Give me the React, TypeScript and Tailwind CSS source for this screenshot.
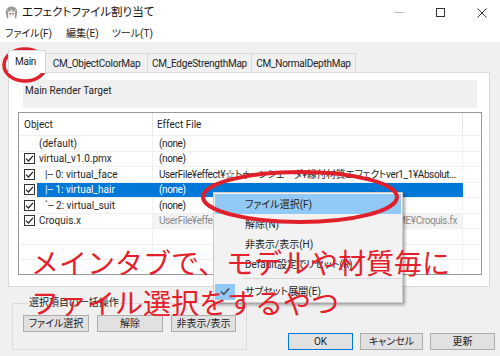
import React from "react";

const ui = "font-['Roboto','Noto_Sans_CJK_JP',sans-serif] [font-feature-settings:'palt']";

type Row = {
  check: boolean;
  label: string;
  indent: boolean;
  file: string;
  selected?: boolean;
  gray?: boolean;
};

const rows: Row[] = [
  { check: false, label: "(default)", indent: false, file: "(none)" },
  { check: true, label: "virtual_v1.0.pmx", indent: false, file: "(none)" },
  {
    check: true,
    label: "|-- 0: virtual_face",
    indent: true,
    file: "UserFile¥effect¥☆トゥーンシェーダ¥縁付材質エフェクトver1_1¥Absolut...",
  },
  { check: true, label: "|-- 1: virtual_hair", indent: true, file: "(none)", selected: true },
  { check: true, label: "`-- 2: virtual_suit", indent: true, file: "(none)" },
  {
    check: true,
    label: "Croquis.x",
    indent: false,
    file: "UserFile¥effect¥クロッキー風エフェクト_ver1.0¥Croquis_MME¥Croquis.fx",
    gray: true,
  },
];

function CheckBox({ checked }: { checked: boolean }) {
  return (
    <div className="w-[11px] h-[11px] border border-[#333] bg-white flex items-center justify-center shrink-0">
      {checked && (
        <svg width="9" height="9" viewBox="0 0 9 9">
          <path d="M1 4.6 L3.4 7 L8 1.8" fill="none" stroke="#222" strokeWidth="1.2" />
        </svg>
      )}
    </div>
  );
}

function AppIcon() {
  return (
    <svg width="13" height="14" viewBox="0 0 13 14">
      <path d="M1 8 C0 3 3 0.5 6.5 0.5 C10 0.5 13 3 12 8 L11 13 L9 10 L4 10 L2 13 Z" fill="#9a9a9a" />
      <path d="M3 6 C4 4.5 9 4.5 10 6 L10 10 C9 12 4 12 3 10 Z" fill="#f4efec" />
      <path d="M2 3 L5 6 L6 2 L8 6 L11 3 L11 5 L2 5 Z" fill="#c8c8c8" />
      <rect x="4.5" y="7" width="1.3" height="1.5" fill="#555" />
      <rect x="7.3" y="7" width="1.3" height="1.5" fill="#555" />
    </svg>
  );
}

function Btn({ children, w, primary }: { children: React.ReactNode; w: string; primary?: boolean }) {
  return (
    <div
      className={`${w} h-[17px] flex items-center justify-center text-[10px] text-[#222] bg-[#e1e1e1] border ${
        primary ? "border-[#0078d7]" : "border-[#adadad]"
      }`}
    >
      {children}
    </div>
  );
}

export default function App() {
  return (
    <div className={`relative w-[500px] h-[356px] overflow-hidden bg-[#f0f0f0] ${ui} text-[#1e1e1e]`}>
      {/* Title bar */}
      <div className="h-[25px] bg-white flex items-center pl-[5px]">
        <AppIcon />
        <span className="ml-[4px] text-[11.5px] text-[#111]">エフェクトファイル割り当て</span>
        <div className="ml-auto flex items-center gap-[32px] pr-[13px]">
          <div className="w-[10px] h-px bg-[#bbb]" />
          <div className="w-[9px] h-[9px] border border-[#333]" />
          <svg width="10" height="10" viewBox="0 0 10 10">
            <path d="M0.5 0.5 L9.5 9.5 M9.5 0.5 L0.5 9.5" stroke="#333" strokeWidth="1" />
          </svg>
        </div>
      </div>

      {/* Menu bar */}
      <div className="h-[17px] bg-white flex items-center text-[10px] text-[#222]">
        <span className="ml-[5px]">ファイル(F)</span>
        <span className="ml-[14px]">編集(E)</span>
        <span className="ml-[13px]">ツール(T)</span>
      </div>

      {/* Body */}
      <div className="px-[8px] pt-[8px]">
        {/* Tabs */}
        <div className="relative z-10 flex items-end h-[23px] -mb-px text-[10px] tracking-[-0.25px] text-[#222] whitespace-nowrap">
          <div className="w-[38px] h-[23px] bg-white border border-b-0 border-[#d9d9d9] flex items-center pl-[6px] pb-[2px]">
            Main
          </div>
          <div className="w-[102px] h-[20px] bg-[#f0f0f0] border border-l-0 border-[#d9d9d9] flex items-center justify-center">
            CM_ObjectColorMap
          </div>
          <div className="w-[104px] h-[20px] bg-[#f0f0f0] border border-l-0 border-[#d9d9d9] flex items-center justify-center">
            CM_EdgeStrengthMap
          </div>
          <div className="w-[104px] h-[20px] bg-[#f0f0f0] border border-l-0 border-[#d9d9d9] flex items-center justify-center">
            CM_NormalDepthMap
          </div>
        </div>

        {/* Panel */}
        <div className="w-[482px] h-[215px] bg-white border border-[#d9d9d9]">
          <div className="ml-[14px] mt-[7px] w-[454px] h-[28px] bg-[#f0f0f0] pl-[2px] pt-[4px] text-[10px] leading-[14px] text-[#222]">
            Main Render Target
          </div>

          {/* List view */}
          <div className="ml-[9px] mt-[4px] w-[464px] h-[163px] border border-[#9a9a9a] bg-white text-[10px] text-[#1e1e1e] overflow-hidden">
            <div className="flex h-[22px]">
              <div className="w-[134px] border-r border-[#e5e5e5] flex items-center pl-[5px]">Object</div>
              <div className="w-[310px] border-r border-[#e5e5e5] flex items-center pl-[4px]">Effect File</div>
              <div className="flex-1" />
            </div>
            {rows.map((r, i) => (
              <div key={i} className="flex h-[15.5px] border-t border-[#f0f0f0]">
                <div className="w-[18px] flex items-center pl-[5px] shrink-0">
                  {r.check && <CheckBox checked />}
                </div>
                <div
                  className={`w-[116px] shrink-0 flex items-center whitespace-nowrap overflow-hidden border-r ${
                    r.selected ? "bg-[#0078d7] text-white border-[#0078d7]" : "border-[#f0f0f0]"
                  } ${r.indent ? "pl-[8px]" : "pl-[2px]"}`}
                >
                  {r.label}
                </div>
                <div
                  className={`w-[310px] shrink-0 flex items-center whitespace-nowrap overflow-hidden pl-[6px] border-r tracking-[-0.4px] ${
                    r.selected
                      ? "bg-[#0078d7] text-white border-[#0078d7]"
                      : r.gray
                      ? "bg-[#f3f3f3] text-[#8a8a8a] border-[#f0f0f0]"
                      : "border-[#f0f0f0]"
                  }`}
                >
                  {r.file}
                </div>
                <div className="flex-1" />
              </div>
            ))}
            {[0, 1, 2].map((k) => (
              <div key={k} className="flex h-[15.5px] border-t border-[#f0f0f0]">
                <div className="w-[134px] border-r border-[#f0f0f0]" />
                <div className="w-[310px] border-r border-[#f0f0f0]" />
              </div>
            ))}
          </div>
        </div>

        {/* Bottom area */}
        <div className="flex mt-[10px]">
          <fieldset className="ml-[4px] w-[235px] border border-[#dcdcdc] px-[10px] pb-[10px]">
            <legend className="ml-[5px] px-[1px] text-[10px] leading-[12px] text-[#222]">選択項目の一括操作</legend>
            <div className="flex gap-[8px] mt-[6px]">
              <Btn w="w-[66px]">ファイル選択</Btn>
              <Btn w="w-[66px]">解除</Btn>
              <Btn w="w-[65px]">非表示/表示</Btn>
            </div>
          </fieldset>
          <div className="ml-auto -mr-[3px] pt-[36px] flex gap-[7px]">
            <Btn w="w-[65px]" primary>
              OK
            </Btn>
            <Btn w="w-[63px]">キャンセル</Btn>
            <Btn w="w-[65px]">更新</Btn>
          </div>
        </div>
      </div>

      {/* Context menu */}
      <div className="absolute left-[213px] top-[192px] w-[190px] bg-[#f2f2f2] border border-[#cccccc] shadow-[2px_2px_3px_rgba(0,0,0,0.35)] p-[1px] text-[10px] text-[#222]">
        <div className="h-[20px] bg-[#91c9f7] flex items-center pl-[30px]">ファイル選択(F)</div>
        <div className="h-[20px] flex items-center pl-[30px]">解除(N)</div>
        <div className="h-[20px] flex items-center pl-[30px]">非表示/表示(H)</div>
        <div className="h-[20px] flex items-center pl-[30px]">Default設定でリセット(R)</div>
        <div className="h-[8px] flex items-center pl-[28px]">
          <div className="w-full h-px bg-[#d7d7d7]" />
        </div>
        <div className="h-[19px] flex items-center">
          <div className="w-[20px] h-[16px] bg-[#91c9f7] flex items-center justify-center">
            <svg width="10" height="9" viewBox="0 0 10 9">
              <path d="M1 4.5 L3.8 7.3 L9 1.5" fill="none" stroke="#333" strokeWidth="1.2" />
            </svg>
          </div>
          <span className="ml-[10px]">サブセット展開(E)</span>
        </div>
      </div>

      {/* Red annotations */}
      <svg className="absolute inset-0 pointer-events-none" width="500" height="356">
        <ellipse cx="25" cy="65" rx="21" ry="16" fill="none" stroke="#e0202a" strokeWidth="3.5" />
        <ellipse cx="300" cy="197" rx="97" ry="25" fill="none" stroke="#e0202a" strokeWidth="4" />
      </svg>
      <div className="absolute left-[31px] top-[242px] text-[28px] leading-[40px] text-[#e5202a] font-['Noto_Sans_CJK_JP',sans-serif] [font-feature-settings:normal] whitespace-nowrap pointer-events-none">
        <div>メインタブで、モデルや材質毎に</div>
        <div>ファイル選択をするやつ</div>
      </div>
    </div>
  );
}
